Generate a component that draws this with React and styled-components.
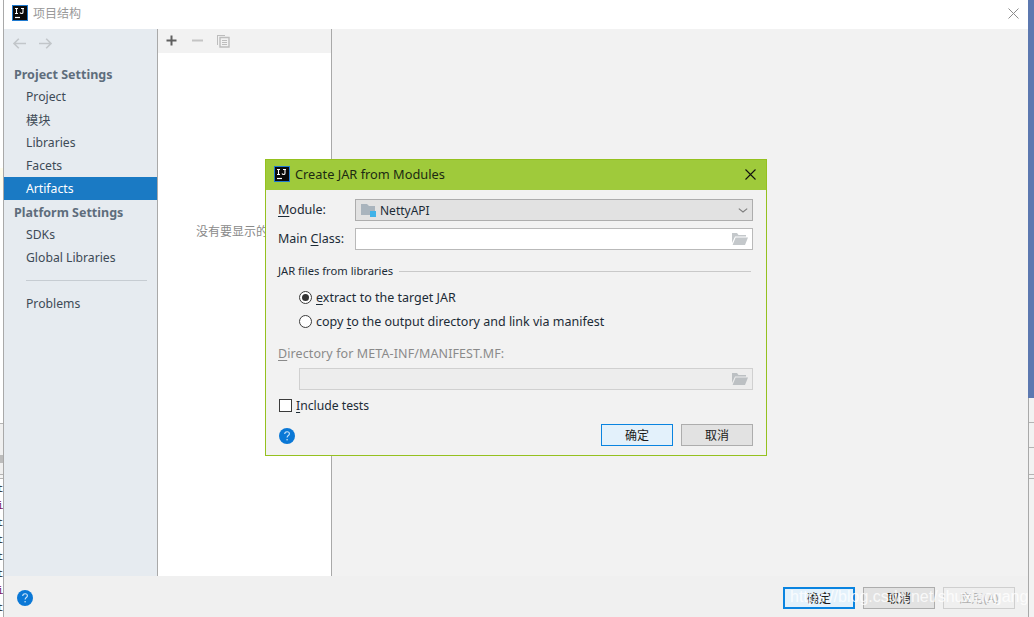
import React from 'react';
import styled, { createGlobalStyle } from 'styled-components';

const Global = createGlobalStyle`
  html, body { margin: 0; padding: 0; background: #f2f2f2; }
  body { font-family: "Noto Sans", "Noto Sans CJK SC", sans-serif; }
  * { box-sizing: border-box; }
`;

const Page = styled.div`
  width: 1034px; height: 617px; display: flex; overflow: hidden; position: relative;
`;
const LeftStrip = styled.div`
  width: 3px; display: flex; flex-direction: column; background: #fff; flex: none;
`;
const StripBlank = styled.div`
  height: ${p => p.$h}px; flex: none; background: ${p => p.$bg};
  border-bottom: ${p => (p.$line ? '1px solid #b4b4b4' : 'none')};
`;
const StripCode = styled.div`
  flex: 1; background: #fff; padding-top: 2px; display: flex; flex-direction: column;
  font: 11px/17px "Liberation Mono", monospace; overflow: hidden; color: #111;
`;
const StripChar = styled.span`
  height: 17px; flex: none; display: block; margin-left: -3px; color: ${p => p.$c || '#222'};
`;
const Win = styled.div`
  flex: 1; display: flex; flex-direction: column; background: #f2f2f2;
  border-left: 1px solid #a9a9a9; min-width: 0;
`;
const TitleBar = styled.div`
  height: 29px; flex: none; background: #fff; display: flex; align-items: center;
  padding: 0 9px 3px 8px; gap: 5px; color: #999; font-size: 12px;
`;
const Grow = styled.div`flex: 1;`;
const Body = styled.div`flex: 1; display: flex; min-height: 0;`;
const Sidebar = styled.div`
  width: 154px; flex: none; background: #e6ebf0; border-right: 1px solid #a9a9a9;
  display: flex; flex-direction: column;
`;
const NavBar = styled.div`
  height: 33px; flex: none; display: flex; align-items: flex-start; gap: 11px; padding: 8px 0 0 8px;
`;
const GroupTitle = styled.div`
  height: 23px; flex: none; display: flex; align-items: center; padding: 1px 0 0 10px;
  font-size: 12.5px; font-weight: 700; color: #5e6d7c;
`;
const NavItem = styled.div`
  height: 23px; flex: none; display: flex; align-items: center; padding-left: 22px;
  font-size: 12.2px; color: ${p => (p.$active ? '#fff' : '#3d4a56')};
  background: ${p => (p.$active ? '#1a7ac4' : 'transparent')};
`;
const NavRule = styled.div`
  height: 1px; flex: none; background: #c6ccd2; margin: 11px 10px 11px 22px;
`;
const ListPanel = styled.div`
  width: 174px; flex: none; background: #fff; border-right: 1px solid #a9a9a9;
  display: flex; flex-direction: column;
`;
const ListTools = styled.div`
  height: 24px; flex: none; background: #f2f2f2; display: flex; align-items: center;
  gap: 13px; padding: 0 0 1px 7px;
`;
const CopySlot = styled.div`display: flex; margin-left: -1px;`;
const EmptyArea = styled.div`
  flex: 1; display: flex; padding: 169px 0 0 38px; font-size: 12px; color: #8a8a8a; white-space: nowrap;
`;
const Content = styled.div`flex: 1; background: #f2f2f2;`;
const Footer = styled.div`
  height: 41px; flex: none; background: #f0f0f0; display: flex; align-items: center;
  padding: 2px 13px 0 13px; gap: 8px;
`;
const Btn = styled.div`
  width: 72px; height: 22px; display: flex; align-items: center; justify-content: center;
  font-size: 12px; color: ${p => (p.$disabled ? '#b0b0b0' : '#1a1a1a')};
  background: ${p => (p.$primary ? '#e3f1fb' : p.$disabled ? '#efefef' : '#e2e2e2')};
  border: ${p => (p.$heavy ? '2px' : '1px')} solid ${p => (p.$primary ? '#0a84e0' : p.$disabled ? '#cfcfcf' : '#adadad')};
`;
const Watermark = styled.div`
  position: absolute; left: 790px; top: 587px; font: 16px/20px "Liberation Sans", sans-serif;
  color: rgba(255,255,255,.8); white-space: nowrap; pointer-events: none;
`;
const RightStrip = styled.div`
  width: 6px; flex: none; display: flex; flex-direction: column;
`;
const RightLower = styled.div`
  flex: 1; display: flex; flex-direction: column; border-left: 1px solid #a9a9a9;
`;

const Dialog = styled.div`
  position: absolute; left: 265px; top: 159px; width: 502px; height: 297px;
  border: 1px solid #95c11f; background: #f2f2f2; display: flex; flex-direction: column;
`;
const DialogHead = styled.div`
  height: 30px; flex: none; background: #9fca3b; display: flex; align-items: center;
  padding: 0 10px 2px 8px; gap: 5px; font-size: 12.8px; color: #1c2a12;
`;
const DialogBody = styled.div`
  flex: 1; display: flex; flex-direction: column; padding: 9px 13px 0 12px; min-height: 0;
`;
const FormRow = styled.div`
  display: flex; flex: none; align-items: center; height: 22px;
  margin-top: ${p => p.$mt || 0}px; margin-bottom: ${p => p.$mb || 0}px;
  font-size: 12.5px; letter-spacing: ${p => (p.$muted ? '.1px' : '0')};
  color: ${p => (p.$muted ? '#8a8a8a' : '#1c2b36')};
`;
const FormLabel = styled.div`width: 77px; flex: none; margin-top: -1px;`;
const Combo = styled.div`
  flex: 1; height: 22px; background: #e2e2e2; border: 1px solid #adadad; display: flex;
  align-items: center; padding: 0 4px 0 5px; gap: 4px; color: #1c2b36; font-size: 12px;
`;
const Field = styled.div`
  flex: 1; height: 22px; background: ${p => (p.$disabled ? '#ededed' : '#fff')};
  border: 1px solid ${p => (p.$disabled ? '#d0d0d0' : '#b9b9b9')};
  display: flex; align-items: center; justify-content: flex-end; padding-right: 4px;
  margin-left: ${p => p.$ml || 0}px;
`;
const SectionHead = styled.div`
  display: flex; flex: none; align-items: center; gap: 6px; font-size: 11.2px; color: #1c2b36;
  height: 20px; margin: 11px 2px 4px 0;
`;
const SectionLabel = styled.span`margin-top: -2px;`;
const Rule = styled.div`flex: 1; height: 1px; background: #c9c9c9;`;
const RadioRow = styled.div`
  display: flex; flex: none; align-items: center; height: 24px; padding-left: 21px; gap: 4px;
  font-size: 12.5px; color: #1c2b36;
`;
const Radio = styled.span`
  width: 13px; height: 13px; border-radius: 50%; border: 1px solid #3b3b3b; background: #fff;
  display: flex; align-items: center; justify-content: center; flex: none;
  &::after {
    content: ""; width: 7px; height: 7px; border-radius: 50%;
    background: ${p => (p.$on ? '#333' : 'transparent')};
  }
`;
const U = styled.span`text-decoration: underline; text-underline-offset: 2px;`;
const CheckRow = styled.div`
  display: flex; flex: none; align-items: center; height: 20px; gap: 4px; margin-top: 6px;
  padding: 0 0 1px 1px; font-size: 12.2px; color: #1c2b36;
`;
const Check = styled.span`
  width: 13px; height: 13px; border: 1px solid #3b3b3b; background: #fff; flex: none;
`;
const DialogFoot = styled.div`
  display: flex; flex: none; align-items: center; gap: 8px; margin-top: 8px; height: 22px;
`;
const HelpSlot = styled.div`display: flex; padding: 2px 0 0 1px;`;

const Icon = styled.svg`
  flex: none; display: block; transform: ${p => (p.$flip ? 'scaleX(-1)' : 'none')};
`;

const IJ = () => (
  <Icon width="16" height="16" viewBox="0 0 16 16">
    <rect x=".5" y=".5" width="15" height="15" fill="#0a0a0a" stroke="#1f7ad0" />
    <path d="M3 3.5h3M4.5 3.5v5M3 8.5h3M8 7.5c.3 1 1 1 1.6 1s1.4-.3 1.4-1.3V3.5M9 3.5h3" fill="none" stroke="#fff" strokeWidth="1.1" />
    <path d="M3 12.5h5" stroke="#fff" strokeWidth="1.2" />
  </Icon>
);
const Arrow = ({ flip }) => (
  <Icon $flip={flip} width="15" height="13" viewBox="0 0 15 13">
    <path d="M14 6.5H2M6.8 1.7 2 6.5l4.8 4.8" fill="none" stroke="#c2c6ca" strokeWidth="1.6" />
  </Icon>
);
const Glyph = ({ d, c }) => (
  <Icon width="13" height="13" viewBox="0 0 13 13"><path d={d} fill="none" stroke={c} strokeWidth="2" /></Icon>
);
const CopyIcon = () => (
  <Icon width="14" height="14" viewBox="0 0 14 14">
    <path d="M1 1h8v1H2v9H1z" fill="#bdbdbd" />
    <path d="M4 3.5h9V13H4z" fill="none" stroke="#bdbdbd" strokeWidth="1.4" />
    <path d="M6 6.5h5M6 8.5h5M6 10.5h5" stroke="#bdbdbd" />
  </Icon>
);
const Close = ({ c, w }) => (
  <Icon width="11" height="11" viewBox="0 0 11 11">
    <path d="M.5.5l10 10M10.5.5l-10 10" stroke={c} strokeWidth={w} fill="none" />
  </Icon>
);
const ModuleIcon = () => (
  <Icon width="15" height="14" viewBox="0 0 15 14">
    <path d="M0 1h6l2 2h6v9H0z" fill="#a9b4bd" />
    <rect x="9" y="8" width="6" height="6" fill="#3fb2e8" />
  </Icon>
);
const Chevron = () => (
  <Icon width="10" height="5" viewBox="0 0 10 5">
    <path d="M.8.6 5 4 9.2.6" fill="none" stroke="#7d7d7d" strokeWidth="1.1" />
  </Icon>
);
const Folder = ({ c = '#c4c8cb' }) => (
  <Icon width="16" height="12" viewBox="0 0 16 12">
    <path d="M0 0h5l1.5 2H14v1.5H3L0 10z" fill={c} />
    <path d="M3.6 4.5H16L13 12H0.6z" fill={c} />
  </Icon>
);
const Help = () => (
  <Icon width="16" height="16" viewBox="0 0 16 16">
    <circle cx="8" cy="8" r="8" fill="#0b78d6" />
    <path d="M5.7 6.1c0-1.6 1-2.4 2.4-2.4s2.3.9 2.3 2c0 1.9-2.3 1.8-2.3 3.8" fill="none" stroke="#cfe6fa" strokeWidth="1.1" />
    <rect x="7.5" y="11" width="1.2" height="1.4" fill="#cfe6fa" />
  </Icon>
);

export default function App() {
  return (
    <Page>
      <Global />
      <LeftStrip>
        <StripBlank $h={168} $bg="#fff" />
        <StripBlank $h={22} $bg="#fffdec" />
        <StripBlank $h={234} $bg="#fff" $line />
        <StripBlank $h={31} $bg="#f0f0f0" />
        <StripBlank $h={8} $bg="#bcbcbc" />
        <StripBlank $h={12} $bg="#f0f0f0" $line />
        <StripBlank $h={4} $bg="#f4f4f4" $line />
        <StripCode>
          {['t', 'i', 't', 't', 't', 't', 'i', 't', 'c'].map((c, i) => (
            <StripChar key={i} $c={c === 'i' ? '#7a1c6a' : c === 'c' ? '#2a2ab0' : undefined}>{c}</StripChar>
          ))}
        </StripCode>
      </LeftStrip>
      <Win>
        <TitleBar>
          <IJ />
          <span>项目结构</span>
          <Grow />
          <Close c="#8c8c8c" w="1" />
        </TitleBar>
        <Body>
          <Sidebar>
            <NavBar><Arrow /><Arrow flip /></NavBar>
            <GroupTitle>Project Settings</GroupTitle>
            <NavItem>Project</NavItem>
            <NavItem>模块</NavItem>
            <NavItem>Libraries</NavItem>
            <NavItem>Facets</NavItem>
            <NavItem $active>Artifacts</NavItem>
            <GroupTitle>Platform Settings</GroupTitle>
            <NavItem>SDKs</NavItem>
            <NavItem>Global Libraries</NavItem>
            <NavRule />
            <NavItem>Problems</NavItem>
          </Sidebar>
          <ListPanel>
            <ListTools>
              <Glyph d="M6.5 1.5v10M1.5 6.5h10" c="#5f5f5f" />
              <Glyph d="M1 6.5h11" c="#c4c4c4" />
              <CopySlot><CopyIcon /></CopySlot>
            </ListTools>
            <EmptyArea>没有要显示的</EmptyArea>
          </ListPanel>
          <Content />
        </Body>
        <Footer>
          <Help />
          <Grow />
          <Btn $primary $heavy>确定</Btn>
          <Btn>取消</Btn>
          <Btn $disabled>应用(A)</Btn>
        </Footer>
      </Win>
      <RightStrip>
        <StripBlank $h={398} $bg="#5c78b0" />
        <RightLower>
          <StripBlank $h={25} $bg="#f2f2f2" $line />
          <StripBlank $h={25} $bg="#f2f2f2" $line />
          <StripBlank $h={27} $bg="#f2f2f2" $line />
          <StripBlank $h={4} $bg="#f2f2f2" $line />
        </RightLower>
      </RightStrip>

      <Dialog>
        <DialogHead>
          <IJ />
          <span>Create JAR from Modules</span>
          <Grow />
          <Close c="#111" w="1.1" />
        </DialogHead>
        <DialogBody>
          <FormRow $mb={7}>
            <FormLabel><U>M</U>odule:</FormLabel>
            <Combo><ModuleIcon /><span>NettyAPI</span><Grow /><Chevron /></Combo>
          </FormRow>
          <FormRow>
            <FormLabel>Main <U>C</U>lass:</FormLabel>
            <Field><Folder /></Field>
          </FormRow>
          <SectionHead><SectionLabel>JAR files from libraries</SectionLabel><Rule /></SectionHead>
          <RadioRow><Radio $on /><span><U>e</U>xtract to the target JAR</span></RadioRow>
          <RadioRow><Radio /><span>copy <U>t</U>o the output directory and link via manifest</span></RadioRow>
          <FormRow $muted $mt={9} $mb={4}>
            <span><U>D</U>irectory for META-INF/MANIFEST.MF:</span>
          </FormRow>
          <FormRow>
            <Field $disabled $ml={21}><Folder c="#bcc0c3" /></Field>
          </FormRow>
          <CheckRow><Check /><span><U>I</U>nclude tests</span></CheckRow>
          <DialogFoot>
            <HelpSlot><Help /></HelpSlot>
            <Grow />
            <Btn $primary>确定</Btn>
            <Btn>取消</Btn>
          </DialogFoot>
        </DialogBody>
      </Dialog>
      <Watermark>https://blog.csdn.net/shuxiaogang</Watermark>
    </Page>
  );
}
